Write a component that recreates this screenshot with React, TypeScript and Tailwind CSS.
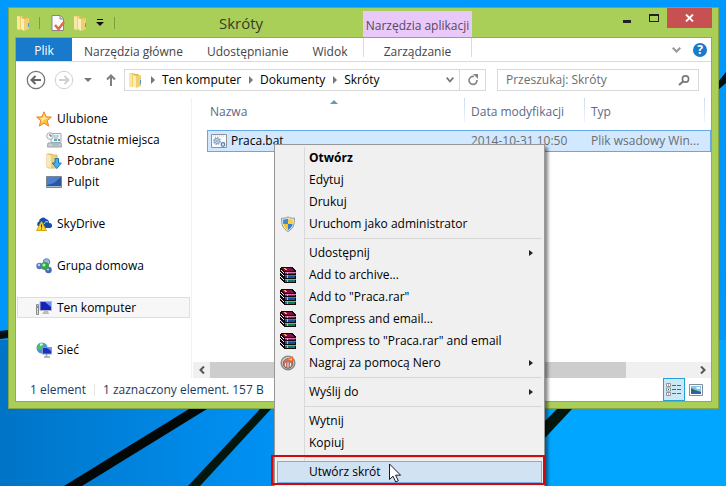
import { ReactNode } from "react";

interface INavItem {
  label: string;
  icon: ReactNode;
  nested?: boolean;
  active?: boolean;
  spaced?: boolean;
}

interface IMenuItem {
  label: string;
  icon?: ReactNode;
  bold?: boolean;
  submenu?: boolean;
  highlighted?: boolean;
}

const FolderIcon = () => (
  <svg width="16" height="16" viewBox="0 0 16 16">
    <path d="M2 1h5l1 1v12l-4 1-2-1z" fill="#f0cf6c" />
    <path d="M2 1l3 1v13l-3-1z" fill="#f9e7a5" />
    <path d="M7 2h4l1 1v11H7z" fill="#e3b94b" />
    <path d="M6 3l3 1v12l-3-2z" fill="#fbeeb8" />
    <path d="M9 4l5-1v11l-5 2z" fill="#efd071" />
    <path d="M13 8h1v4h-1z" fill="#4a9bdc" />
  </svg>
);

const PropertiesIcon = () => (
  <svg width="16" height="16" viewBox="0 0 16 16">
    <path d="M2 .5h8.500L13.500 3.500v12H2z" fill="#fbfbfd" stroke="#85858f" />
    <path d="M10 .5v3.500h3.500" fill="#ddd" stroke="#85858f" />
    <path d="M5 10l3.500 4L14 7" fill="none" stroke="#e06a45" strokeWidth="2.500" />
  </svg>
);

const StarIcon = () => (
  <svg width="16" height="16" viewBox="0 0 16 16">
    <path
      d="M8 .8l2 5 5.400.3-4.200 3.500 1.500 5.500L8 12.200l-4.700 2.900 1.500-5.500L.6 6.100 6 5.800z"
      fill="#ffc23c"
      stroke="#e8822a"
    />
    <path d="M8 3l1.200 3.600L12 7 8 9 5 12l1-3-2-2 2.800-.3z" fill="#ffe98e" />
  </svg>
);

const RecentIcon = () => (
  <svg width="16" height="16" viewBox="0 0 16 16">
    <path d="M5 1.500h10v9H5z" fill="#f2f6f8" stroke="#a3acb1" />
    <path d="M2 11h13l.5 4H1.500z" fill="#c9cfd2" stroke="#9aa3a8" />
    <path d="M8 4h5M8 6h4M6 13h7" stroke="#8fabbb" />
    <path d="M8 7h3v2H8z" fill="#3fb0d6" />
    <path d="M12 7h2v2h-2z" fill="#58a865" />
    <circle cx="4" cy="4" r="3.300" fill="#f6f8f9" stroke="#a3acb1" />
    <path d="M4 2v2h2" fill="none" stroke="#56626b" />
  </svg>
);

const DownloadsIcon = () => (
  <svg width="16" height="16" viewBox="0 0 16 16">
    <path d="M1 1h5l1 1h4v13H3l-2-1z" fill="#ecd07c" stroke="#d8ba66" />
    <path d="M1 1l4 2v12l-4-1z" fill="#f9eab1" />
    <path
      d="M9 5.500h3.500V10h2.800L10.800 15.500 6.300 10H9z"
      fill="#45b0ee"
      stroke="#1f78b8"
    />
  </svg>
);

const DesktopIcon = () => (
  <svg width="16" height="16" viewBox="0 0 16 16">
    <path d="M.5 2.500h15v11H.5z" fill="#2955a3" stroke="#7b8694" />
    <path d="M1 3h14L8 9 1 11z" fill="#4b80ce" />
    <path d="M1 12h14v1H1z" fill="#aab7c8" />
  </svg>
);

const SkyDriveIcon = () => (
  <svg width="16" height="16" viewBox="0 0 16 16">
    <path
      d="M3 11a3 3 0 0 1 0-5.500A4 4 0 0 1 10 3a4 4 0 0 1 3 4 2.500 2.500 0 0 1 1 5H4z"
      fill="#1450a8"
    />
    <path d="M8 8c1-2 2-3 4-2" fill="none" stroke="#fff" strokeWidth=".8" />
    <path d="M5.500 5.500l5 9h-10z" fill="#ffd530" stroke="#d6a414" />
    <path d="M5.500 8.500v3M5.500 12.500v1" stroke="#333" />
  </svg>
);

const HomeGroupIcon = () => (
  <svg width="16" height="16" viewBox="0 0 16 16">
    <circle cx="10.500" cy="4" r="3.300" fill="#9db5e2" stroke="#5f7fc2" />
    <circle cx="3.500" cy="8" r="3.200" fill="#5577c8" />
    <circle cx="12.500" cy="12" r="3.300" fill="#4a68ba" />
    <circle cx="9" cy="8" r="4" fill="#35a34b" />
    <circle cx="8" cy="7" r="1.600" fill="#b4e8b4" />
    <circle cx="3" cy="7" r="1.200" fill="#c4d3f4" />
    <circle cx="12" cy="11.500" r="1" fill="#c4d3f4" />
  </svg>
);

const ComputerIcon = () => (
  <svg width="16" height="16" viewBox="0 0 16 16">
    <path d="M.5 4.500h2v10h-2z" fill="#d7dde0" stroke="#858d92" />
    <path d="M1 6h1v2H1z" fill="#48b857" />
    <path d="M4 1.500h11.500v9H4z" fill="#1423b8" stroke="#b3b9bf" />
    <path d="M9 2h6v5z" fill="#6f8ff0" />
    <path d="M8 11h4l1 3H6z" fill="#b5bcc2" />
  </svg>
);

const NetworkIcon = () => (
  <svg width="16" height="16" viewBox="0 0 16 16">
    <circle cx="6" cy="6" r="5.500" fill="#3e96dc" />
    <path d="M2 3c2-3 6-2 7 0L6 5 5 8 1 7z" fill="#4fc06a" />
    <path d="M4 2l2-1 1 2-3 1z" fill="#dbf5e1" />
    <path d="M6.500 5.500h9v6.500h-9z" fill="#1a30c0" stroke="#8c9bb4" />
    <path d="M11 6h4v3z" fill="#6e8ef0" />
    <path d="M10.500 12v2.500M8 15h6" stroke="#98a2b0" strokeWidth="1.500" />
  </svg>
);

const BatchFileIcon = () => (
  <svg width="16" height="14" viewBox="0 0 16 14">
    <path d="M.5.500h15v13H.5z" fill="#fafcfe" stroke="#8b949c" />
    <path d="M2 2h12" stroke="#c0c8ce" strokeDasharray="1 1" />
    <circle cx="6" cy="7" r="3" fill="none" stroke="#8eaac4" strokeWidth="2" strokeDasharray="1.500 .8" />
    <circle cx="6" cy="7" r="2.300" fill="#dfeaf4" stroke="#7f9fbd" />
    <circle cx="6" cy="7" r=".8" fill="#5580a8" />
    <circle cx="12" cy="10.500" r="1.800" fill="#d4e5f4" stroke="#5580a8" strokeWidth="1.200" />
  </svg>
);

const ShieldIcon = () => (
  <svg width="16" height="16" viewBox="0 0 16 16">
    <path
      d="M8 .8c2 1.400 4 1.400 6.500 1.400 0 6-1 10.300-6.500 13.300C2.500 12.500 1.500 8.200 1.500 2.200 4 2.200 6 2.200 8 .8z"
      fill="#e5e9ec"
      stroke="#8b979f"
    />
    <path d="M8 2.500V8H3.300C3 6.500 3 5 3 3.500 5 3.500 6.500 3.300 8 2.500z" fill="#3a8cd8" />
    <path d="M8 2.500V8h4.700c.3-1.500.3-3 .3-4.500-2 0-3.500-.2-5-1z" fill="#fbd03b" />
    <path d="M8 14V8H3.300C4 10.800 5.500 12.700 8 14z" fill="#fbc42b" />
    <path d="M8 14V8h4.700C12 10.800 10.500 12.700 8 14z" fill="#3480d0" />
  </svg>
);

const WinRarIcon = () => (
  <svg width="16" height="16" viewBox="0 0 16 16" shapeRendering="crispEdges">
    <path d="M1 0h11l4 4v12H5l-5-4V2z" fill="#17080f" />
    <path d="M1 1h10l4 3H5z" fill="#861046" />
    <path d="M5 5h11v1H5z" fill="#d774ac" />
    <path d="M5 6h10v1H5z" fill="#9c1760" />
    <path d="M5 8h11v1H5z" fill="#2c7cd0" />
    <path d="M5 9h10v2H5z" fill="#0d4f9c" />
    <path d="M5 12h11v1H5z" fill="#4cc49a" />
    <path d="M5 13h10v2H5z" fill="#0b7d5a" />
    <path d="M1 3l3 2v1L1 4zM1 6l3 2v1L1 7zM1 10l3 2v1l-3-2z" fill="#f2f0ee" />
    <path d="M0 5h1v1H0zM0 9h1v1H0z" fill="#f0f0f0" />
    <path d="M4 1h2v1H4zM5 2h2v1H5zM7 5h1v2H7zM7 8h1v3H7zM7 12h1v3H7z" fill="#d8c23c" />
  </svg>
);

const NeroIcon = () => (
  <svg width="16" height="16" viewBox="0 0 16 16">
    <circle cx="8" cy="8" r="6.800" fill="#dadada" stroke="#8a8a8a" strokeWidth="1.500" />
    <circle cx="8" cy="8.500" r="4.800" fill="#b7766c" stroke="#8d5c55" />
    <path d="M4 6c2-3 5-2 9-5-.5 2 1.500 3 .5 6-2-2-5.500-2-9.500-1z" fill="#f4662a" />
    <path d="M8 4.500c2 0 3-1 4-2-.5 1.500.5 2 0 3z" fill="#ffd145" />
    <path d="M5.500 8v3.500M8 7.500v5M10.500 8v3.500" stroke="#f0e9e7" />
  </svg>
);

const navItems: INavItem[] = [
  { label: "Ulubione", icon: <StarIcon /> },
  { label: "Ostatnie miejsca", icon: <RecentIcon />, nested: true },
  { label: "Pobrane", icon: <DownloadsIcon />, nested: true },
  { label: "Pulpit", icon: <DesktopIcon />, nested: true },
  { label: "SkyDrive", icon: <SkyDriveIcon />, spaced: true },
  { label: "Grupa domowa", icon: <HomeGroupIcon />, spaced: true },
  { label: "Ten komputer", icon: <ComputerIcon />, spaced: true, active: true },
  { label: "Sieć", icon: <NetworkIcon />, spaced: true },
];

const menuGroups: IMenuItem[][] = [
  [
    { label: "Otwórz", bold: true },
    { label: "Edytuj" },
    { label: "Drukuj" },
    { label: "Uruchom jako administrator", icon: <ShieldIcon /> },
  ],
  [
    { label: "Udostępnij", submenu: true },
    { label: "Add to archive...", icon: <WinRarIcon /> },
    { label: 'Add to "Praca.rar"', icon: <WinRarIcon /> },
    { label: "Compress and email...", icon: <WinRarIcon /> },
    { label: 'Compress to "Praca.rar" and email', icon: <WinRarIcon /> },
    { label: "Nagraj za pomocą Nero", icon: <NeroIcon />, submenu: true },
  ],
  [{ label: "Wyślij do", submenu: true }],
  [{ label: "Wytnij" }, { label: "Kopiuj" }],
  [{ label: "Utwórz skrót", highlighted: true }],
];

const Wallpaper = () => (
  <svg
    className="absolute inset-0 h-full w-full"
    viewBox="0 0 726 486"
    preserveAspectRatio="xMidYMid slice"
  >
    <defs>
      <linearGradient id="sky" x1="0" y1="0" x2="0" y2="1">
        <stop offset="0" stopColor="#0099fd" />
        <stop offset=".45" stopColor="#0096fa" />
        <stop offset="1" stopColor="#0098f8" />
      </linearGradient>
      <linearGradient id="shade" x1="0" y1="0" x2="1" y2="0">
        <stop offset="0" stopColor="#0074c6" />
        <stop offset=".35" stopColor="#0090f2" />
        <stop offset=".75" stopColor="#00a6ff" />
      </linearGradient>
    </defs>
    <path d="M0 0h726v486H0z" fill="url(#sky)" />
    <path d="M0 340h726v146H0z" fill="url(#shade)" />
    <path d="M0 331l8-1v8l-8 1zM718 82l8-10v11l-8 7z" fill="#06100e" />
    <path d="M189 409h18L82 486H64z" fill="#030807" />
    <path d="M260 409h11l-71 77h-12z" fill="#04170f" />
    <path d="M557 409h15l-28 30v-17z" fill="#04170f" />
  </svg>
);

const Crumb = ({ label }: { label: string }) => (
  <>
    <svg className="shrink-0" width="5" height="8" viewBox="0 0 5 8">
      <path d="M0 0l4 4-4 4z" fill="#777" />
    </svg>
    <a href="#" className="mr-2 ml-1.5">
      {label}
    </a>
  </>
);

const TitleBar = () => (
  <header className="flex h-[29px] shrink-0">
    <div className="flex w-[354px] items-center pl-1.5">
      <FolderIcon />
      <span className="mr-2.5 ml-2 h-3 w-px bg-[#7f9c43]" />
      <button aria-label="Właściwości">
        <PropertiesIcon />
      </button>
      <button aria-label="Nowy folder" className="ml-1.5">
        <FolderIcon />
      </button>
      <button aria-label="Dostosuj" className="ml-2">
        <svg width="8" height="7" viewBox="0 0 8 7">
          <path d="M1 0h6v1H1zM0 3h8L4 7z" fill="#111" />
        </svg>
      </button>
      <span className="ml-2.5 h-3 w-px bg-[#7f9c43]" />
      <h1 className="ml-[104px] text-[15px] text-[#363c28]">Skróty</h1>
    </div>
    <div className="mt-[3px] flex w-[109px] items-center justify-center bg-[#e9c9f9] pt-1 whitespace-nowrap text-[#57475f]">
      Narzędzia aplikacji
    </div>
    <div className="ml-auto flex h-5 pr-[6px]">
      <button aria-label="Minimalizuj" className="w-[27px]">
        <span className="mx-auto mt-1.5 block h-[3px] w-2 bg-[#222]" />
      </button>
      <button aria-label="Maksymalizuj" className="w-[27px]">
        <span className="mx-auto block h-2 w-2.5 border border-t-2 border-[#222]" />
      </button>
      <button
        aria-label="Zamknij"
        className="flex w-[45px] items-center justify-center bg-[#c75050]"
      >
        <svg width="9" height="8" viewBox="0 0 9 8">
          <path d="M1 .5l7 7M8 .5l-7 7" stroke="#fff" strokeWidth="1.800" />
        </svg>
      </button>
    </div>
  </header>
);

const Ribbon = () => (
  <nav className="flex h-6 shrink-0 border-b border-[#dadbdc] text-[#444]">
    <div className="flex w-[347px] whitespace-nowrap">
      <button className="w-14 bg-[#1979ca] pt-0.5 text-white">Plik</button>
      <button className="ml-3 pt-1">Narzędzia główne</button>
      <button className="ml-6 pt-1">Udostępnianie</button>
      <button className="ml-6 pt-1">Widok</button>
    </div>
    <button className="mb-1 w-[109px] border-x border-[#dcdcdc] pt-2 leading-3">
      Zarządzanie
    </button>
    <div className="ml-auto flex items-center gap-3 pr-1">
      <button aria-label="Zwiń wstążkę">
        <svg width="9" height="6" viewBox="0 0 9 6">
          <path d="M.7.7l3.800 3.800L8.300.7" fill="none" stroke="#999" strokeWidth="2" />
        </svg>
      </button>
      <button
        aria-label="Pomoc"
        className="h-3.5 w-3.5 rounded-full bg-[#1979ca] leading-3.5 font-bold text-white"
      >
        ?
      </button>
    </div>
  </nav>
);

const AddressBar = () => (
  <div className="flex h-9 shrink-0 items-center pr-3 pl-[10px]">
    <button aria-label="Wstecz">
      <svg width="20" height="20" viewBox="0 0 20 20">
        <circle cx="10" cy="10" r="8.700" fill="#fff" stroke="#757575" strokeWidth="1.300" />
        <path d="M15 10H6M9.500 6L5.500 10l4 4" fill="none" stroke="#666" strokeWidth="2" />
      </svg>
    </button>
    <button aria-label="Dalej" className="ml-2">
      <svg width="20" height="20" viewBox="0 0 20 20">
        <circle cx="10" cy="10" r="8.700" fill="#fff" stroke="#cfcfcf" />
        <path d="M5 10h9M10.500 6l4 4-4 4" fill="none" stroke="#cfcfcf" strokeWidth="1.800" />
      </svg>
    </button>
    <button aria-label="Historia" className="ml-2.5">
      <svg width="8" height="4" viewBox="0 0 8 4">
        <path d="M0 0h8L4 4z" fill="#777" />
      </svg>
    </button>
    <button aria-label="W górę" className="ml-3.5">
      <svg width="10" height="12" viewBox="0 0 10 12">
        <path d="M5 12V2M1 5.500L5 1.500l4 4" fill="none" stroke="#808080" strokeWidth="2" />
      </svg>
    </button>
    <div className="ml-2 flex h-[22px] flex-1 items-center border border-[#d9d9d9] pl-0.5 whitespace-nowrap">
      <FolderIcon />
      <span className="ml-2" />
      <Crumb label="Ten komputer" />
      <Crumb label="Dokumenty" />
      <Crumb label="Skróty" />
      <button aria-label="Poprzednie lokalizacje" className="mr-[5px] ml-auto">
        <svg width="8" height="6" viewBox="0 0 8 6">
          <path d="M.7.7L4 4.500 7.300.7" fill="none" stroke="#777" strokeWidth="1.800" />
        </svg>
      </button>
      <button
        aria-label="Odśwież"
        className="flex h-full w-[26px] items-center justify-center border-l border-[#d9d9d9]"
      >
        <svg width="12" height="12" viewBox="0 0 12 12">
          <path d="M7 2.500a4 4 0 1 0 3 3.500" fill="none" stroke="#858585" strokeWidth="1.600" />
          <path d="M6 0h5v5z" fill="#858585" />
        </svg>
      </button>
    </div>
    <label className="ml-[11px] flex h-[22px] w-[202px] items-center border border-[#d9d9d9] pr-2 pl-2">
      <input
        type="search"
        placeholder="Przeszukaj: Skróty"
        aria-label="Przeszukaj: Skróty"
        className="w-0 flex-1 outline-none placeholder:text-[#6d6d6d]"
      />
      <svg width="12" height="11" viewBox="0 0 12 11">
        <circle cx="7.500" cy="4" r="3.100" fill="none" stroke="#777" strokeWidth="1.600" />
        <path d="M5 6.500L1 10" stroke="#777" strokeWidth="2" />
      </svg>
    </label>
  </div>
);

const NavPane = () => (
  <ul className="w-44 shrink-0 border-r border-[#f2f2f2] pt-2.5">
    {navItems.map((item) => (
      <li key={item.label} className={item.spaced ? "mt-[21px]" : ""}>
        <a
          href="#"
          className={`mx-px flex h-[21px] items-center gap-[5px] border whitespace-nowrap ${
            item.nested ? "pl-7" : "pl-[18px]"
          } ${item.active ? "border-[#dedede] bg-[#f7f7f7]" : "border-transparent"}`}
        >
          {item.icon}
          {item.label}
        </a>
      </li>
    ))}
  </ul>
);

const HeaderDivider = () => (
  <span className="h-6 w-px self-start bg-linear-to-b from-[#c9dcf2] to-[#eef5fc]" />
);

const FileList = () => (
  <div className="flex min-w-0 flex-1 flex-col">
    <div className="flex-1 pl-[15px]">
      <table className="w-full table-fixed border-collapse whitespace-nowrap">
        <thead className="text-[#5a6a85]">
          <tr className="h-8">
            <th className="p-0 text-left font-normal">
              <div className="relative flex h-8 items-start justify-between">
                <span className="pt-1.5 pl-[3px]">Nazwa</span>
                <svg className="absolute top-0.5 left-[123px]" width="8" height="4" viewBox="0 0 8 4">
                  <path d="M0 4h8L4 0z" fill="#5f9ac0" />
                </svg>
                <HeaderDivider />
              </div>
            </th>
            <th className="w-[120px] p-0 text-left font-normal">
              <div className="flex h-8 items-start justify-between">
                <span className="pt-1.5 pl-1.5">Data modyfikacji</span>
                <HeaderDivider />
              </div>
            </th>
            <th className="w-[126px] p-0 text-left font-normal">
              <div className="flex h-8 items-start justify-between pr-1.5">
                <span className="pt-1.5 pl-1.5">Typ</span>
                <HeaderDivider />
              </div>
            </th>
          </tr>
        </thead>
        <tbody>
          <tr className="h-[22px] bg-[#d1e8ff] text-[#6d6d6d] outline -outline-offset-1 outline-[#66a7e8]">
            <td className="p-0 text-black">
              <span className="flex items-center gap-1 pl-1">
                <BatchFileIcon />
                Praca.bat
              </span>
            </td>
            <td className="p-0 pl-1.5">2014-10-31 10:50</td>
            <td className="p-0 pl-1.5">Plik wsadowy Win...</td>
          </tr>
        </tbody>
      </table>
    </div>
    <div className="ml-px flex h-4 bg-[#f0f0f0]">
      <button aria-label="Przewiń w lewo" className="flex w-[17px] items-center justify-center">
        <svg width="6" height="8" viewBox="0 0 6 8">
          <path d="M5 .5L1.500 4 5 7.500" fill="none" stroke="#555" strokeWidth="2" />
        </svg>
      </button>
      <div className="flex-1">
        <div className="h-full w-[86%] bg-[#cdcdcd]" />
      </div>
      <button aria-label="Przewiń w prawo" className="flex w-[17px] items-center justify-center">
        <svg width="6" height="8" viewBox="0 0 6 8">
          <path d="M1 .5L4.500 4 1 7.500" fill="none" stroke="#555" strokeWidth="2" />
        </svg>
      </button>
    </div>
  </div>
);

const StatusBar = () => (
  <footer className="flex h-[23px] shrink-0 items-center text-[#1e395b]">
    <span className="ml-[14px]">1 element</span>
    <span className="mx-2 h-3 w-px bg-[#e6e6e6]" />
    <span>1 zaznaczony element. 157 B</span>
    <div className="ml-auto flex h-full items-center pr-2">
      <button
        aria-label="Szczegóły"
        className="flex h-full w-[22px] items-center justify-center border border-[#26a0da] bg-[#cbe8f6]"
      >
        <svg width="16" height="13" viewBox="0 0 16 13">
          <path
            d="M.5.500h4v3h-4zM.5 5h4v3h-4zM.5 9.500h4v3h-4z"
            fill="#fff"
            stroke="#8b97a3"
          />
          <path d="M2 1.500h1v1H2zM2 6h1v1H2zM2 10.500h1v1H2z" fill="#b03a2e" />
          <path d="M6 2.500h4M11 2.500h4M6 6.500h4M11 6.500h4M6 10.500h4M11 10.500h4" stroke="#4c6478" />
        </svg>
      </button>
      <button aria-label="Duże miniatury" className="ml-1">
        <svg width="14" height="12" viewBox="0 0 14 12">
          <path d="M.5.500h13v11H.5z" fill="#fff" stroke="#7d8c9b" />
          <path d="M2 2h10v8H2z" fill="#8ac3ea" />
          <path d="M2 4l4 2 6 2v2H2z" fill="#24705c" />
          <path d="M2 8h10v2H2z" fill="#2863a8" />
          <path d="M7 3h4v2H8z" fill="#f2f8fc" />
        </svg>
      </button>
    </div>
  </footer>
);

const MenuRow = ({ item }: { item: IMenuItem }) => (
  <li className="relative px-0.5">
    <button
      className={`flex h-[22px] w-full items-center border whitespace-nowrap ${
        item.highlighted ? "border-[#78aee5] bg-[#d1e2f2]" : "border-transparent"
      } ${item.bold ? "font-bold" : ""}`}
    >
      <span className="mr-3 ml-[2px] w-[17px]">{item.icon}</span>
      {item.label}
      {item.submenu && (
        <svg className="mr-2 ml-auto" width="4" height="6" viewBox="0 0 4 6">
          <path d="M0 0l4 3-4 3z" fill="#222" />
        </svg>
      )}
    </button>
    {item.highlighted && (
      <>
        <span className="pointer-events-none absolute -top-1.5 -right-px -left-1 h-[30px] border-2 border-[#cc0c0c]" />
        <svg
          className="absolute top-0.5 left-[114px]"
          width="13"
          height="20"
          viewBox="0 0 13 20"
        >
          <path
            d="M.5 1v15.500l3.500-3.300 2.700 5.800 2.600-1.200-2.700-5.600h5z"
            fill="#fff"
            stroke="#1b1b2b"
          />
        </svg>
      </>
    )}
  </li>
);

const ContextMenu = () => (
  <div className="absolute top-36 left-[274px] w-[271px] border border-[#979797] bg-[#f0f0f0] py-0.5 shadow-[3px_3px_3px_rgba(0,0,0,0.45)]">
    <span className="absolute inset-y-0.5 left-[29px] w-px bg-[#d9d9d9]" />
    {menuGroups.map((group, index) => (
      <ul
        key={group[0].label}
        className={
          index > 0
            ? "before:my-[3px] before:mr-0.5 before:ml-[30px] before:block before:h-px before:bg-[#d7d7d7]"
            : ""
        }
      >
        {group.map((item) => (
          <MenuRow key={item.label} item={item} />
        ))}
      </ul>
    ))}
    <div className="h-6" />
  </div>
);

const App = () => {
  return (
    <div className="relative flex h-screen flex-col overflow-hidden pt-[7px] pr-[7px] pb-[77px] pl-2 font-['Open_Sans','Noto_Sans',sans-serif] text-xs text-black">
      <Wallpaper />
      <main className="relative flex min-h-0 flex-1 flex-col border border-[#86a546] bg-[#a9cf59]">
        <TitleBar />
        <div className="mx-1.5 mb-1.5 flex min-h-0 flex-1 flex-col border border-[#8fae4d] bg-white">
          <Ribbon />
          <AddressBar />
          <div className="flex min-h-0 flex-1">
            <NavPane />
            <FileList />
          </div>
          <StatusBar />
        </div>
      </main>
      <ContextMenu />
    </div>
  );
};

export default App;
